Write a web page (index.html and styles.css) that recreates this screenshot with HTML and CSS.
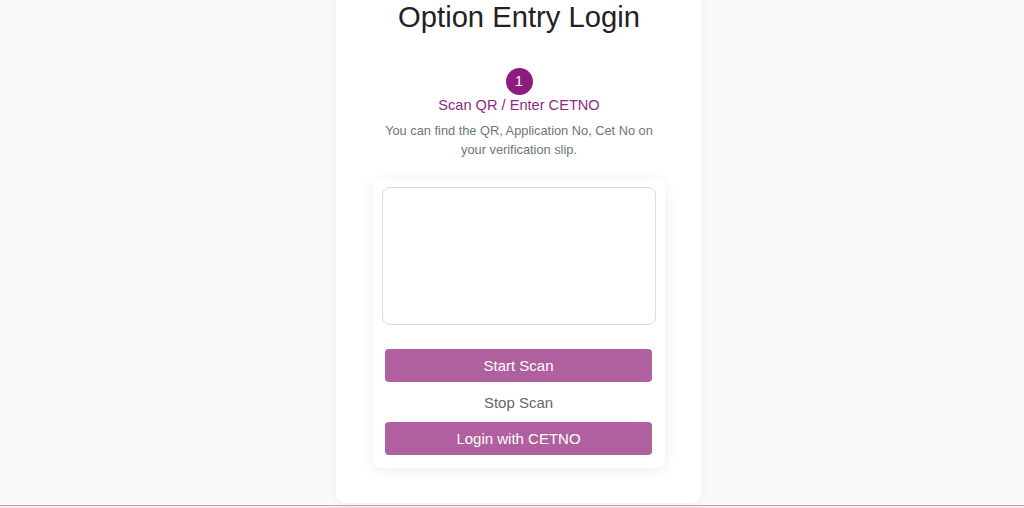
FILE: index.html
```html
<!DOCTYPE html>
<html lang="en">
<head>
<meta charset="utf-8">
<title>Option Entry Login</title>
<link rel="stylesheet" href="styles.css">
</head>
<body>
<main class="page">
  <section class="card">
    <h1 class="title">Option Entry Login</h1>
    <div class="step">
      <span class="step-num">1</span>
      <span class="step-label">Scan QR / Enter CETNO</span>
    </div>
    <p class="hint">You can find the QR, Application No, Cet No on your verification slip.</p>
    <div class="scanner">
      <div class="viewport"></div>
      <button class="btn btn-primary" type="button">Start Scan</button>
      <button class="btn btn-link" type="button">Stop Scan</button>
      <button class="btn btn-primary" type="button">Login with CETNO</button>
    </div>
  </section>
</main>
<footer class="footer"></footer>
</body>
</html>
```

FILE: styles.css
```css
html, body {
  margin: 0;
  padding: 0;
}
body {
  background: #fafafa;
  font-family: "Liberation Sans", Arial, sans-serif;
  color: #212529;
  height: 508px;
  overflow: hidden;
}
.page {
  display: flex;
  justify-content: center;
  padding-left: 13px;
  height: 505px;
}
.card {
  box-sizing: border-box;
  width: 365px;
  margin-top: -20px;
  height: 523px;
  padding: 19px 36px 0 37px;
  background: #fff;
  border-radius: 10px;
  box-shadow: 0 2px 12px rgba(0, 0, 0, 0.05);
  display: flex;
  flex-direction: column;
  align-items: stretch;
}
.title {
  margin: 0;
  font-size: 29.2px;
  line-height: 36px;
  font-weight: 400;
  text-align: center;
  color: #222;
}
.step {
  margin-top: 33px;
  display: flex;
  flex-direction: column;
  align-items: center;
}
.step-num {
  width: 27px;
  height: 27px;
  border-radius: 50%;
  background: #8e1b7e;
  color: #fff;
  font-size: 14px;
  line-height: 27px;
  text-align: center;
}
.step-label {
  font-size: 14.6px;
  line-height: 20px;
  color: #8e2a82;
}
.hint {
  margin: 6px 0 0;
  font-size: 12.8px;
  line-height: 19px;
  color: #6c757d;
  text-align: center;
  padding: 0 8px;
}
.scanner {
  margin-top: 20px;
  box-sizing: border-box;
  height: 289px;
  padding: 8px 9px 13px;
  background: #fff;
  border-radius: 8px;
  box-shadow: 0 2px 14px rgba(0, 0, 0, 0.08);
  display: flex;
  flex-direction: column;
}
.viewport {
  box-sizing: border-box;
  height: 138px;
  border: 1px solid #dcdcdc;
  border-radius: 8px;
  background: #fff;
}
.btn {
  font-family: inherit;
  font-size: 15px;
  border: 0;
  margin: 0 4px 0 3px;
  padding: 0;
  cursor: pointer;
}
.btn-primary {
  height: 33px;
  background: #b05f9f;
  color: #fff;
  border-radius: 4px;
}
.scanner .viewport + .btn-primary {
  margin-top: 24px;
}
.btn-link {
  height: 40px;
  background: transparent;
  color: #666;
}
.footer {
  box-sizing: border-box;
  height: 3px;
  border-top: 1px solid #e39aa5;
  background: #f9eaec;
}
```
